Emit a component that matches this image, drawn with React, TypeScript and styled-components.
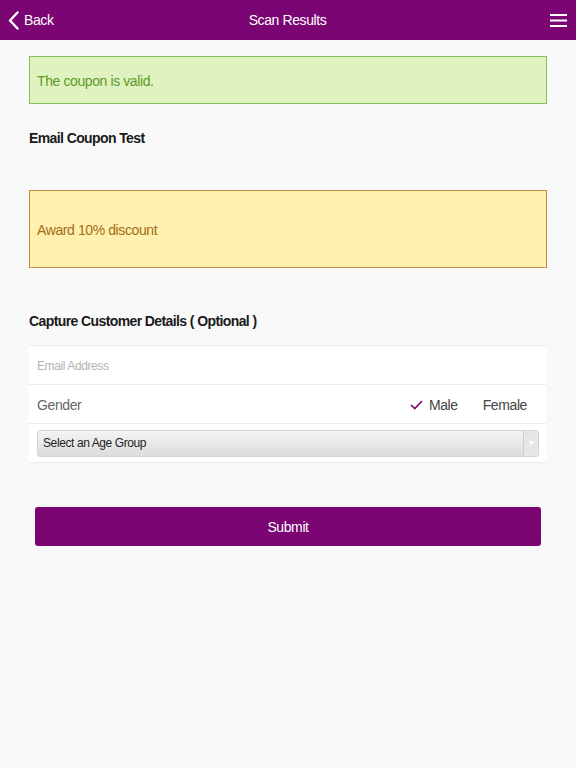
import React from 'react';
import styled, { createGlobalStyle } from 'styled-components';

const purple = '#7a0573';

const GlobalStyle = createGlobalStyle`
  html, body {
    margin: 0;
    padding: 0;
    background: #f9f9f9;
    font-family: "Liberation Sans", Arial, sans-serif;
    letter-spacing: -0.4px;
  }
  * { box-sizing: border-box; }
`;

export default function App() {
  return (
    <>
      <GlobalStyle />
      <Page>
        <Header>
          <BackButton>
            <svg width="11" height="19" viewBox="0 0 11 19">
              <path d="M9.5 1.5 L2 9.5 L9.5 17.5" fill="none" stroke="#fff" strokeWidth="2.4" strokeLinecap="round" strokeLinejoin="round" />
            </svg>
            <span>Back</span>
          </BackButton>
          <Title>Scan Results</Title>
          <MenuButton>
            <svg width="17" height="13" viewBox="0 0 17 13">
              <rect x="0" y="0" width="17" height="2" fill="#fff" />
              <rect x="0" y="5.5" width="17" height="2" fill="#fff" />
              <rect x="0" y="11" width="17" height="2" fill="#fff" />
            </svg>
          </MenuButton>
        </Header>

        <Content>
          <Alert tone="success">The coupon is valid.</Alert>
          <SectionTitle>Email Coupon Test</SectionTitle>
          <Alert tone="warning" tall>Award 10% discount</Alert>
          <SectionTitle>Capture Customer Details ( Optional )</SectionTitle>

          <FieldList>
            <FieldRow>
              <Placeholder>Email Address</Placeholder>
            </FieldRow>
            <FieldRow>
              <Label>Gender</Label>
              <Options>
                <Option>
                  <svg width="13" height="10" viewBox="0 0 13 10">
                    <path d="M1 5 L4.8 8.6 L12 1" fill="none" stroke={purple} strokeWidth="1.6" />
                  </svg>
                  Male
                </Option>
                <Option>Female</Option>
              </Options>
            </FieldRow>
            <FieldRow compact>
              <Select>
                <span>Select an Age Group</span>
                <SelectArrow>
                  <svg width="5" height="4" viewBox="0 0 5 4">
                    <path d="M0 0 H5 L2.5 4 Z" fill="#fff" />
                  </svg>
                </SelectArrow>
              </Select>
            </FieldRow>
          </FieldList>

          <SubmitButton>Submit</SubmitButton>
        </Content>
      </Page>
    </>
  );
}

const Page = styled.div`
  min-height: 768px;
  background: #f9f9f9;
`;

const Header = styled.header`
  height: 40px;
  background: ${purple};
  display: grid;
  grid-template-columns: 1fr auto 1fr;
  align-items: center;
  padding: 0 9px 0 8px;
  color: #fff;
`;

const BackButton = styled.div`
  display: flex;
  align-items: center;
  gap: 5px;
  font-size: 14px;
  & svg { display: block; }
`;

const Title = styled.div`
  font-size: 14px;
`;

const MenuButton = styled.div`
  justify-self: end;
  display: flex;
  & svg { display: block; }
`;

const Content = styled.main`
  padding: 16px 29px 0 29px;
  display: flex;
  flex-direction: column;
`;

const Alert = styled.div<{ tone: 'success' | 'warning'; tall?: boolean }>`
  height: ${({ tall }) => (tall ? '78px' : '48px')};
  display: flex;
  align-items: center;
  padding: 1px 7px 0;
  font-size: 14px;
  border: 1px solid ${({ tone }) => (tone === 'success' ? '#8cbb5a' : '#c08d45')};
  background: ${({ tone }) => (tone === 'success' ? '#e0f2c0' : '#fff0b0')};
  color: ${({ tone }) => (tone === 'success' ? '#5c9a25' : '#a36c16')};
`;

const SectionTitle = styled.h2`
  margin: 0;
  font-size: 14px;
  font-weight: bold;
  letter-spacing: -0.6px;
  color: #1a1a1a;
  height: 86px;
  line-height: 16px;
  padding-top: 26px;

  &:nth-of-type(2) {
    height: 77px;
    padding-top: 45px;
  }
`;

const FieldList = styled.div`
  border-top: 1px solid #ececec;
  width: 517px;
`;

const FieldRow = styled.div<{ compact?: boolean }>`
  height: 39px;
  background: #fff;
  border-bottom: 1px solid #ececec;
  display: flex;
  align-items: center;
  padding: ${({ compact }) => (compact ? '0 7px 0 8px' : '2px 19px 0 8px')};
`;

const Placeholder = styled.span`
  font-size: 12px;
  color: #b3b3b3;
`;

const Label = styled.span`
  font-size: 14px;
  color: #666;
  flex: 1;
`;

const Options = styled.div`
  display: flex;
  align-items: center;
  gap: 25px;
`;

const Option = styled.span`
  display: flex;
  align-items: center;
  gap: 6px;
  font-size: 14px;
  color: #444;
`;

const Select = styled.div`
  flex: 1;
  height: 27px;
  border: 1px solid #d4d4d4;
  border-radius: 3px;
  background: linear-gradient(#f4f4f4, #dcdcdc);
  display: flex;
  align-items: center;
  justify-content: space-between;
  padding-left: 5px;
  font-size: 12px;
  color: #222;
  overflow: hidden;
`;

const SelectArrow = styled.div`
  width: 15px;
  height: 100%;
  border-left: 1px solid #d0d0d0;
  background: #e6e6e6;
  display: flex;
  align-items: center;
  justify-content: center;
`;

const SubmitButton = styled.button`
  margin: 44px 6px 0 6px;
  width: 506px;
  height: 39px;
  border: none;
  border-radius: 3px;
  background: ${purple};
  color: #fff;
  font-family: inherit;
  font-size: 14px;
  letter-spacing: -0.4px;
`;
